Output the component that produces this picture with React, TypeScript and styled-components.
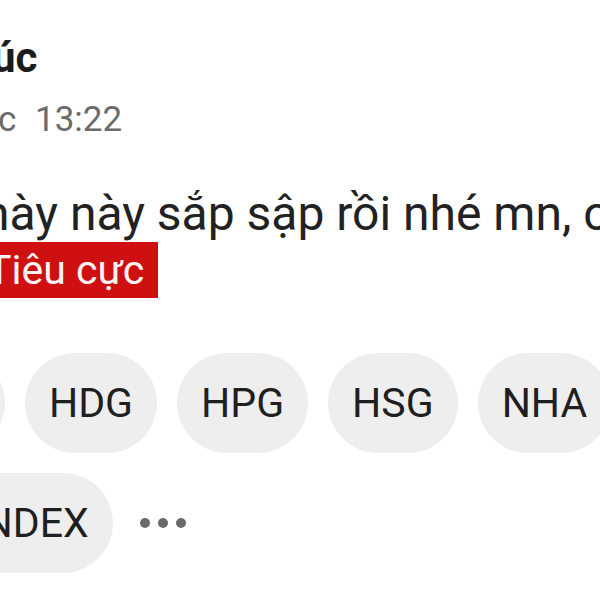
import React from "react";
import styled, { createGlobalStyle } from "styled-components";

const GlobalStyle = createGlobalStyle`
  html, body {
    margin: 0;
    padding: 0;
    background: #ffffff;
  }
  body {
    width: 600px;
    height: 600px;
    overflow: hidden;
    font-family: Roboto, "Noto Sans", "Liberation Sans", sans-serif;
  }
`;

const Post = styled.article`
  display: flex;
  flex-direction: column;
  align-items: flex-start;
  padding-top: 34px;
  width: 600px;
`;

const AuthorName = styled.h2`
  margin: 0 0 0 -8px;
  font-size: 42px;
  line-height: 48px;
  font-weight: 700;
  color: #1c1c1c;
  white-space: nowrap;
`;

const Timestamp = styled.div`
  margin: 16px 0 0 -2px;
  font-size: 35px;
  line-height: 44px;
  word-spacing: 10px;
  color: #6b6b6b;
  white-space: nowrap;
`;

const Content = styled.p`
  margin: 44px 0 0 -17px;
  font-size: 48px;
  line-height: 56px;
  color: #222222;
  white-space: nowrap;
`;

const SentimentTag = styled.span`
  display: inline-block;
  margin-left: -13px;
  padding: 0 14px 0 0;
  height: 56px;
  font-size: 41px;
  line-height: 56px;
  color: #fff4f4;
  background: #cf1010;
  white-space: nowrap;
`;

const TickerList = styled.div`
  display: flex;
  flex-wrap: wrap;
  align-items: center;
  gap: 20px;
  width: 950px;
  margin: 55px 0 0 -107px;
`;

const Ticker = styled.span`
  display: inline-flex;
  align-items: center;
  justify-content: center;
  height: 100px;
  padding: 0 24px;
  border-radius: 50px;
  background: #eeeeee;
  color: #1f1f1f;
  font-size: 41px;
  white-space: nowrap;
`;

const MoreButton = styled.button`
  display: inline-flex;
  align-items: center;
  gap: 8px;
  padding: 0 7px;
  height: 40px;
  border: none;
  background: transparent;
  cursor: pointer;
`;

const Dot = styled.span`
  width: 10px;
  height: 10px;
  border-radius: 50%;
  background: #6a6a6a;
`;

const tickers = ["VIC", "HDG", "HPG", "HSG", "NHA", "NVL", "VNINDEX"];

export default function App() {
  return (
    <>
      <GlobalStyle />
      <Post>
        <AuthorName>úc</AuthorName>
        <Timestamp>c 13:22</Timestamp>
        <Content>này này sắp sập rồi nhé mn, chạy thôi</Content>
        <SentimentTag>Tiêu cực</SentimentTag>
        <TickerList>
          {tickers.map((t) => (
            <Ticker key={t}>{t}</Ticker>
          ))}
          <MoreButton aria-label="Thêm">
            <Dot />
            <Dot />
            <Dot />
          </MoreButton>
        </TickerList>
      </Post>
    </>
  );
}
